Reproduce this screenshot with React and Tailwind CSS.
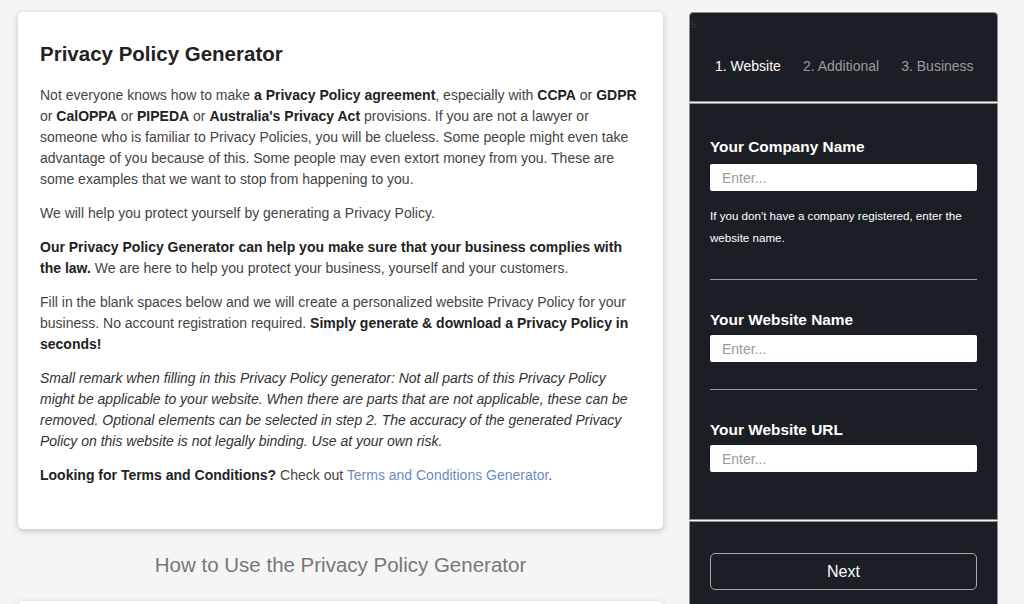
import React from "react";

// Campo del formulario del generador
const Field = ({ label, className = "", gap = "mt-[7px]" }) => (
  <div className={className}>
    <label className="block text-[15.4px] font-bold leading-[20px] text-white">{label}</label>
    <input
      type="text"
      placeholder="Enter..."
      className={`${gap} block h-[27px] w-full rounded-[2px] bg-white px-[12px] text-[14px] text-[#333] placeholder:text-[#9a9a9a] focus:outline-none`}
    />
  </div>
);

const B = ({ children }) => <strong className="font-bold text-[#222]">{children}</strong>;

export default function App() {
  return (
    <div className="min-h-[604px] w-full overflow-hidden bg-[#f5f5f5] font-['Liberation_Sans',Arial,sans-serif]">
      <div className="flex items-start gap-[26px] pl-[18px] pt-[12px]">
        {/* Columna izquierda */}
        <div className="w-[645px] shrink-0">
          <div className="rounded-[5px] bg-white pb-[43px] pl-[22px] pr-[23px] pt-[28px] shadow-[0_2px_6px_rgba(0,0,0,0.22)]">
            <h1 className="text-[20.5px] font-bold leading-[28px] text-[#222]">Privacy Policy Generator</h1>
            <div className="mt-[17px] space-y-[13px] text-[14px] leading-[21px] text-[#444]">
              <p>
                Not everyone knows how to make <B>a Privacy Policy agreement</B>, especially with <B>CCPA</B> or{" "}
                <B>GDPR</B> or <B>CalOPPA</B> or <B>PIPEDA</B> or <B>Australia's Privacy Act</B> provisions. If you are
                not a lawyer or someone who is familiar to Privacy Policies, you will be clueless. Some people might even
                take advantage of you because of this. Some people may even extort money from you. These are some
                examples that we want to stop from happening to you.
              </p>
              <p>We will help you protect yourself by generating a Privacy Policy.</p>
              <p>
                <B>Our Privacy Policy Generator can help you make sure that your business complies with the law.</B> We
                are here to help you protect your business, yourself and your customers.
              </p>
              <p>
                Fill in the blank spaces below and we will create a personalized website Privacy Policy for your
                business. No account registration required.{" "}
                <B>Simply generate &amp; download a Privacy Policy in seconds!</B>
              </p>
              <p className="italic text-[#333]">
                Small remark when filling in this Privacy Policy generator: Not all parts of this Privacy Policy might be
                applicable to your website. When there are parts that are not applicable, these can be removed. Optional
                elements can be selected in step 2. The accuracy of the generated Privacy Policy on this website is not
                legally binding. Use at your own risk.
              </p>
              <p>
                <B>Looking for Terms and Conditions?</B> Check out{" "}
                <a href="#" className="text-[#6a8bc3]">
                  Terms and Conditions Generator
                </a>
                .
              </p>
            </div>
          </div>
          <h2 className="mt-[24px] text-center text-[20.5px] leading-[24px] text-[#777]">
            How to Use the Privacy Policy Generator
          </h2>
          <div className="mt-[24px] h-[40px] rounded-[5px] bg-white shadow-[0_2px_6px_rgba(0,0,0,0.22)]"></div>
        </div>

        {/* Panel derecho */}
        <div className="flex w-[309px] shrink-0 flex-col gap-[1px]">
          <div className="h-[90px] rounded-t-[4px] border border-[#8e8e8e] bg-[#1c1e25]">
            <div className="pt-[3px] text-[13px] leading-[16px] text-[#33363d]">s</div>
            <div className="mt-[26px] flex gap-[22px] pl-[25px] text-[14px] leading-[16px]">
              <span className="text-white">1. Website</span>
              <span className="text-[#9a9a9a]">2. Additional</span>
              <span className="text-[#9a9a9a]">3. Business</span>
            </div>
          </div>

          <div className="border border-[#8e8e8e] bg-[#1c1e25] px-[20px] pb-[47px] pt-[33px]">
            <Field label="Your Company Name" />
            <p className="mt-[14px] text-[11.6px] leading-[22px] text-white">
              If you don't have a company registered, enter the website name.
            </p>
            <hr className="mt-[30px] border-t border-[#9a9a9a]" />
            <Field label="Your Website Name" className="mt-[30px]" gap="mt-[5px]" />
            <hr className="mt-[27px] border-t border-[#9a9a9a]" />
            <Field label="Your Website URL" className="mt-[30px]" gap="mt-[5px]" />
          </div>

          <div className="h-[90px] border border-[#8e8e8e] bg-[#1c1e25] px-[20px] pt-[31px]">
            <button className="h-[37px] w-full rounded-[5px] border border-[#a8a8a8] text-[16px] text-white">
              Next
            </button>
          </div>
        </div>
      </div>
    </div>
  );
}
